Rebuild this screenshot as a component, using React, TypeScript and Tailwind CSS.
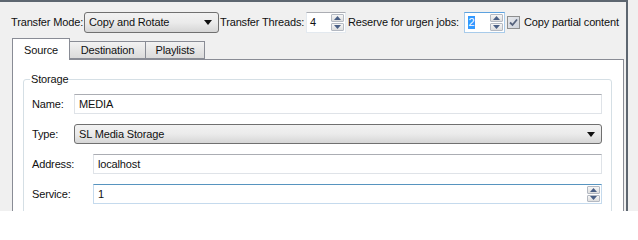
import React from 'react';

const font = { fontFamily: '"Liberation Sans", Arial, sans-serif' };

function Arrow({ up }: { up: boolean }) {
  return (
    <svg width="7" height="4" viewBox="0 0 7 4">
      <path d={up ? 'M3.5 0L7 4H0z' : 'M0 0H7L3.5 4z'} fill="#4a5f85" />
    </svg>
  );
}

function SpinButtons() {
  return (
    <div className="flex flex-col w-[13px] h-full gap-[1px] shrink-0">
      <div className="flex-1 flex items-center justify-center border border-[#b4b9c2] rounded-[1px] bg-gradient-to-b from-[#f6f6f6] to-[#dedede]">
        <Arrow up />
      </div>
      <div className="flex-1 flex items-center justify-center border border-[#b4b9c2] rounded-[1px] bg-gradient-to-b from-[#f6f6f6] to-[#dedede]">
        <Arrow up={false} />
      </div>
    </div>
  );
}

function ComboArrow() {
  return (
    <svg width="8" height="5" viewBox="0 0 8 5">
      <path d="M0 0H8L4 5z" fill="#111" />
    </svg>
  );
}

function Combo({ value, className }: { value: string; className: string }) {
  return (
    <div
      className={`flex items-center justify-between shrink-0 pl-[4px] pr-[6px] border border-[#707070] rounded-[3px] bg-gradient-to-b from-[#f2f2f2] via-[#ebebeb] to-[#d6d6d6] text-[#111] ${className}`}
    >
      <span>{value}</span>
      <ComboArrow />
    </div>
  );
}

function TextBox({ value, className }: { value: string; className: string }) {
  return (
    <div
      className={`flex items-center pl-[4px] bg-white border border-[#dfe3e8] border-t-[#abadb3] ${className}`}
    >
      {value}
    </div>
  );
}

export default function App() {
  return (
    <div
      className="w-[638px] h-[211px] overflow-hidden bg-[#f0f0f0] flex text-[11px] tracking-[-0.15px] text-[#111] whitespace-nowrap"
      style={font}
    >
      <div className="w-[628px] shrink-0 h-full border-t-2 border-r-2 border-[#5d6670] flex flex-col">
        {/* top row */}
        <div className="flex items-center h-[21px] mt-[10px] pl-[11px]">
          <span className="w-[73px] shrink-0">Transfer Mode:</span>
          <Combo value="Copy and Rotate" className="w-[135px] h-[21px]" />
          <span className="ml-[1px] w-[86px] shrink-0">Transfer Threads:</span>
          <div className="shrink-0 w-[40px] h-[21px] flex items-center justify-between bg-white border border-[#e3e9ef] border-t-[#abadb3] pl-[3px] pr-[1px] py-[1px]">
            <span>4</span>
            <SpinButtons />
          </div>
          <span className="ml-[2px] w-[116px] shrink-0">Reserve for urgen jobs:</span>
          <div className="shrink-0 w-[41px] h-[21px] flex items-center justify-between bg-white border border-[#a8cbea] border-t-[#5da2df] pl-[3px] pr-[1px] py-[1px]">
            <span className="bg-[#3399ff] text-white leading-[13px] px-[0.5px]">2</span>
            <SpinButtons />
          </div>
          <div className="ml-[2px] shrink-0 w-[13px] h-[13px] border border-[#8e8f8f] bg-gradient-to-br from-[#e6e8ec] to-[#cfd4dc] flex items-center justify-center">
            <svg width="9" height="9" viewBox="0 0 9 9">
              <path d="M1 4.5L3.5 7L8 1.5" stroke="#55627c" strokeWidth="1.8" fill="none" />
            </svg>
          </div>
          <span className="ml-[4px] shrink-0">Copy partial content</span>
        </div>

        {/* tabs */}
        <div className="flex items-end h-[21px] mt-[5px] pl-[12px] relative z-10">
          <div className="w-[58px] h-[22px] -mb-[1px] bg-white border border-[#898c95] border-b-0 flex items-start justify-center pt-[3px]">
            Source
          </div>
          <div className="w-[77px] h-[18px] -ml-[1px] border border-[#898c95] bg-gradient-to-b from-[#f2f2f2] to-[#dbdbdb] flex items-center justify-center">
            Destination
          </div>
          <div className="w-[60px] h-[18px] -ml-[1px] border border-[#898c95] bg-gradient-to-b from-[#f2f2f2] to-[#dbdbdb] flex items-center justify-center">
            Playlists
          </div>
        </div>

        {/* panel */}
        <div className="ml-[12px] w-[612px] flex-1 bg-white border border-[#898c95] pl-[10px] pr-[11px] pt-[12px]">
          <fieldset className="border border-[#d5dfe5] rounded-[3px] pl-[8px] pr-[9px] pb-[10px]">
            <legend className="-ml-[2px] px-[1px] leading-[14px]">Storage</legend>
            <div className="flex flex-col gap-[10px] pt-[8px]">
              <div className="flex items-center h-[20px]">
                <span className="w-[42px] shrink-0">Name:</span>
                <TextBox value="MEDIA" className="flex-1 h-[20px]" />
              </div>
              <div className="flex items-center h-[20px]">
                <span className="w-[42px] shrink-0">Type:</span>
                <Combo value="SL Media Storage" className="flex-1 h-[20px] pr-[5px]" />
              </div>
              <div className="flex items-center h-[20px]">
                <span className="w-[61px] shrink-0">Address:</span>
                <TextBox value="localhost" className="flex-1 h-[20px]" />
              </div>
              <div className="flex items-center h-[20px]">
                <span className="w-[61px] shrink-0">Service:</span>
                <div className="flex-1 h-[20px] flex items-center justify-between bg-white border border-[#c5daed] border-t-[#5794bf] pl-[4px] pr-[1px] py-[1px]">
                  <span>1</span>
                  <SpinButtons />
                </div>
              </div>
            </div>
          </fieldset>
        </div>
      </div>
    </div>
  );
}
